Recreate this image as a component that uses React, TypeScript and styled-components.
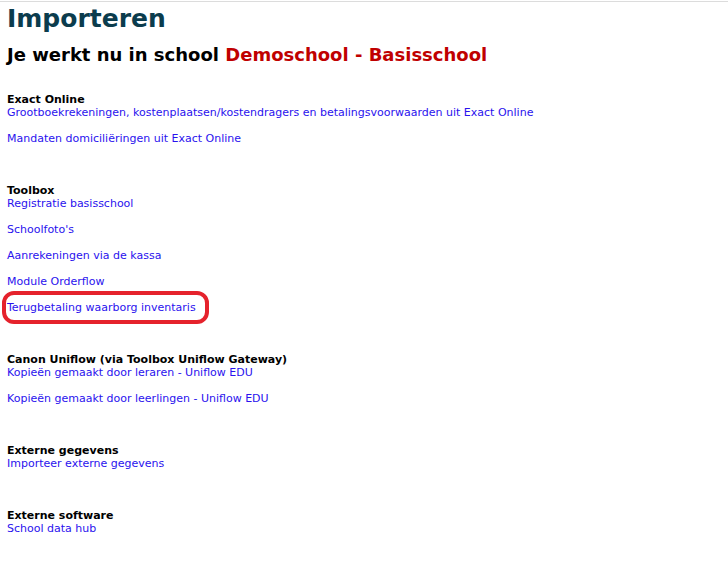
import styled, { createGlobalStyle } from "styled-components";

const GlobalStyle = createGlobalStyle`
  html, body {
    margin: 0;
    padding: 0;
    background: #ffffff;
  }
  body {
    font-family: "DejaVu Sans", Verdana, sans-serif;
    font-size: 11px;
    line-height: 13px;
    color: #000000;
  }
`;

type Section = {
  title: string;
  links: string[];
  highlight?: string;
};

const SECTIONS: Section[] = [
  {
    title: "Exact Online",
    links: [
      "Grootboekrekeningen, kostenplaatsen/kostendragers en betalingsvoorwaarden uit Exact Online",
      "Mandaten domiciliëringen uit Exact Online",
    ],
  },
  {
    title: "Toolbox",
    links: [
      "Registratie basisschool",
      "Schoolfoto's",
      "Aanrekeningen via de kassa",
      "Module Orderflow",
      "Terugbetaling waarborg inventaris",
    ],
    highlight: "Terugbetaling waarborg inventaris",
  },
  {
    title: "Canon Uniflow (via Toolbox Uniflow Gateway)",
    links: [
      "Kopieën gemaakt door leraren - Uniflow EDU",
      "Kopieën gemaakt door leerlingen - Uniflow EDU",
    ],
  },
  {
    title: "Externe gegevens",
    links: ["Importeer externe gegevens"],
  },
  {
    title: "Externe software",
    links: ["School data hub"],
  },
];

function App() {
  return (
    <>
      <GlobalStyle />
      <Page>
        <Title>Importeren</Title>
        <SchoolLine>
          Je werkt nu in school <SchoolName>Demoschool - Basisschool</SchoolName>
        </SchoolLine>
        {SECTIONS.map((section) => (
          <Block key={section.title}>
            <BlockTitle>{section.title}</BlockTitle>
            {section.links.map((link) => (
              <LinkRow key={link}>
                <Link href="#" $marked={link === section.highlight}>
                  {link}
                </Link>
              </LinkRow>
            ))}
          </Block>
        ))}
      </Page>
    </>
  );
}

const Page = styled.div`
  border-top: 1px solid #dcdcdc;
  margin-top: 1px;
  padding: 0 7px;
`;

const Title = styled.h1`
  margin: 0;
  padding-top: 2px;
  font-size: 25px;
  line-height: 29px;
  font-weight: bold;
  color: #0b3c4d;
`;

const SchoolLine = styled.h2`
  margin: 10px 0 0;
  font-size: 18px;
  line-height: 24px;
  font-weight: bold;
  color: #000000;
`;

const SchoolName = styled.span`
  color: #c00000;
`;

const Block = styled.div`
  margin-top: 26px;

  & + & {
    margin-top: 39px;
  }
`;

const BlockTitle = styled.div`
  font-weight: bold;
`;

const LinkRow = styled.div`
  & + & {
    margin-top: 13px;
  }
`;

const Link = styled.a<{ $marked?: boolean }>`
  position: relative;
  color: #2a12ee;
  text-decoration: none;

  &::after {
    content: "";
    display: ${(p) => (p.$marked ? "block" : "none")};
    position: absolute;
    top: -10px;
    bottom: -10px;
    left: -5px;
    right: -13px;
    border: 4px solid #e5222c;
    border-radius: 12px;
    pointer-events: none;
  }
`;

export default App;
